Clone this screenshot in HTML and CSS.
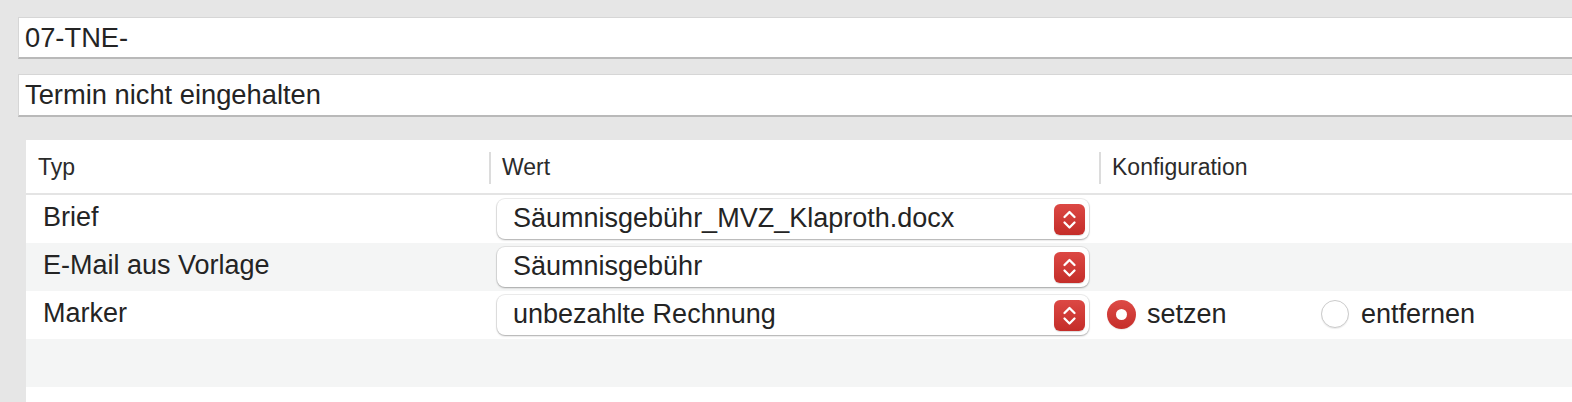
FILE: index.html
```html
<!DOCTYPE html>
<html>
<head>
  <title>Aktion bearbeiten</title>
  <link rel="stylesheet" href="styles.css">
</head>
<body>
  <div class="fields">
    <div class="field">07-TNE-</div>
    <div class="field">Termin nicht eingehalten</div>
  </div>

  <div class="table">
    <div class="thead">
      <div class="th">Typ</div>
      <div class="th">Wert</div>
      <div class="th">Konfiguration</div>
    </div>

    <div class="row">
      <div class="cell label">Brief</div>
      <div class="cell">
        <div class="select">
          <span>Säumnisgebühr_MVZ_Klaproth.docx</span>
          <svg class="stepper" width="31" height="31" viewBox="0 0 31 31">
            <path d="M10.5 13 L15.5 8 L20.5 13 M10.5 18.5 L15.5 23.5 L20.5 18.5" fill="none" stroke="#fff" stroke-width="2.3" stroke-linecap="round" stroke-linejoin="round"/>
          </svg>
        </div>
      </div>
      <div class="cell"></div>
    </div>

    <div class="row alt">
      <div class="cell label">E-Mail aus Vorlage</div>
      <div class="cell">
        <div class="select">
          <span>Säumnisgebühr</span>
          <svg class="stepper" width="31" height="31" viewBox="0 0 31 31">
            <path d="M10.5 13 L15.5 8 L20.5 13 M10.5 18.5 L15.5 23.5 L20.5 18.5" fill="none" stroke="#fff" stroke-width="2.3" stroke-linecap="round" stroke-linejoin="round"/>
          </svg>
        </div>
      </div>
      <div class="cell"></div>
    </div>

    <div class="row">
      <div class="cell label">Marker</div>
      <div class="cell">
        <div class="select">
          <span>unbezahlte Rechnung</span>
          <svg class="stepper" width="31" height="31" viewBox="0 0 31 31">
            <path d="M10.5 13 L15.5 8 L20.5 13 M10.5 18.5 L15.5 23.5 L20.5 18.5" fill="none" stroke="#fff" stroke-width="2.3" stroke-linecap="round" stroke-linejoin="round"/>
          </svg>
        </div>
      </div>
      <div class="cell config">
        <div class="option"><span class="radio checked"></span>setzen</div>
        <div class="option"><span class="radio"></span>entfernen</div>
      </div>
    </div>

    <div class="row alt"></div>
  </div>
</body>
</html>
```

FILE: styles.css
```css
html, body {
  margin: 0;
  padding: 0;
  overflow: hidden;
}

body {
  background-color: #e6e6e6;
  color: #242424;
  font-family: 'Liberation Sans', Arial, sans-serif;
  height: 402px;
}

.fields {
  padding: 17px 0 0 18px;
}

.field {
  background-color: #fff;
  border-top: 1px solid #d6d6d6;
  border-left: 1px solid #d6d6d6;
  border-bottom: 2px solid #b9b9b9;
  height: 39px;
  margin-bottom: 15px;
  padding-left: 6px;
  font-size: 27.3px;
  line-height: 39px;
  white-space: nowrap;
}

.field + .field {
  height: 40px;
  line-height: 40px;
}

.table {
  background-color: #fff;
  margin-left: 26px;
  margin-top: 23px;
  height: 264px;
}

.thead,
.row {
  display: grid;
  grid-template-columns: 463px 610px 1fr;
}

.thead {
  height: 53px;
  border-bottom: 2px solid #e4e4e4;
}

.th {
  display: flex;
  align-items: center;
  font-size: 23px;
  color: #2b2b2b;
  padding-left: 12px;
  padding-top: 2px;
}

.th + .th {
  padding-left: 0;
}

.th + .th::before {
  content: "";
  width: 2px;
  height: 32px;
  background-color: #dcdcdc;
  margin-right: 11px;
}

.row {
  height: 48px;
}

.row.alt {
  background-color: #f4f5f5;
}

.cell {
  display: flex;
  align-items: center;
  font-size: 27px;
}

.label {
  padding-left: 17px;
  padding-bottom: 3px;
}

.select {
  display: flex;
  align-items: center;
  justify-content: space-between;
  box-sizing: border-box;
  width: 592px;
  height: 40px;
  margin-left: 8px;
  padding: 0 4px 0 16px;
  background-color: #fff;
  border-radius: 8px;
  box-shadow: 0 0 0 1px rgba(0, 0, 0, 0.07), 0 1px 2px rgba(0, 0, 0, 0.28);
  white-space: nowrap;
}

.select span {
  padding-bottom: 2px;
}

.stepper {
  display: block;
  border-radius: 6px;
  background: linear-gradient(#dc4844, #c42d29);
  box-shadow: 0 1px 1px rgba(0, 0, 0, 0.15);
}

.config {
  padding-left: 8px;
}

.option {
  display: flex;
  align-items: center;
  width: 214px;
  padding-bottom: 2px;
}

.radio {
  box-sizing: border-box;
  width: 28px;
  height: 28px;
  margin-right: 12px;
  border-radius: 50%;
  background-color: #fff;
  border: 1px solid #cbcbcb;
  box-shadow: 0 1px 1px rgba(0, 0, 0, 0.08);
  position: relative;
}

.radio.checked {
  width: 29px;
  height: 29px;
  margin-right: 11px;
  border: none;
  background: linear-gradient(#dd4a46, #c52e2a);
}

.radio.checked::after {
  content: "";
  position: absolute;
  left: 9px;
  top: 9px;
  width: 11px;
  height: 11px;
  border-radius: 50%;
  background-color: #fff;
}
```
